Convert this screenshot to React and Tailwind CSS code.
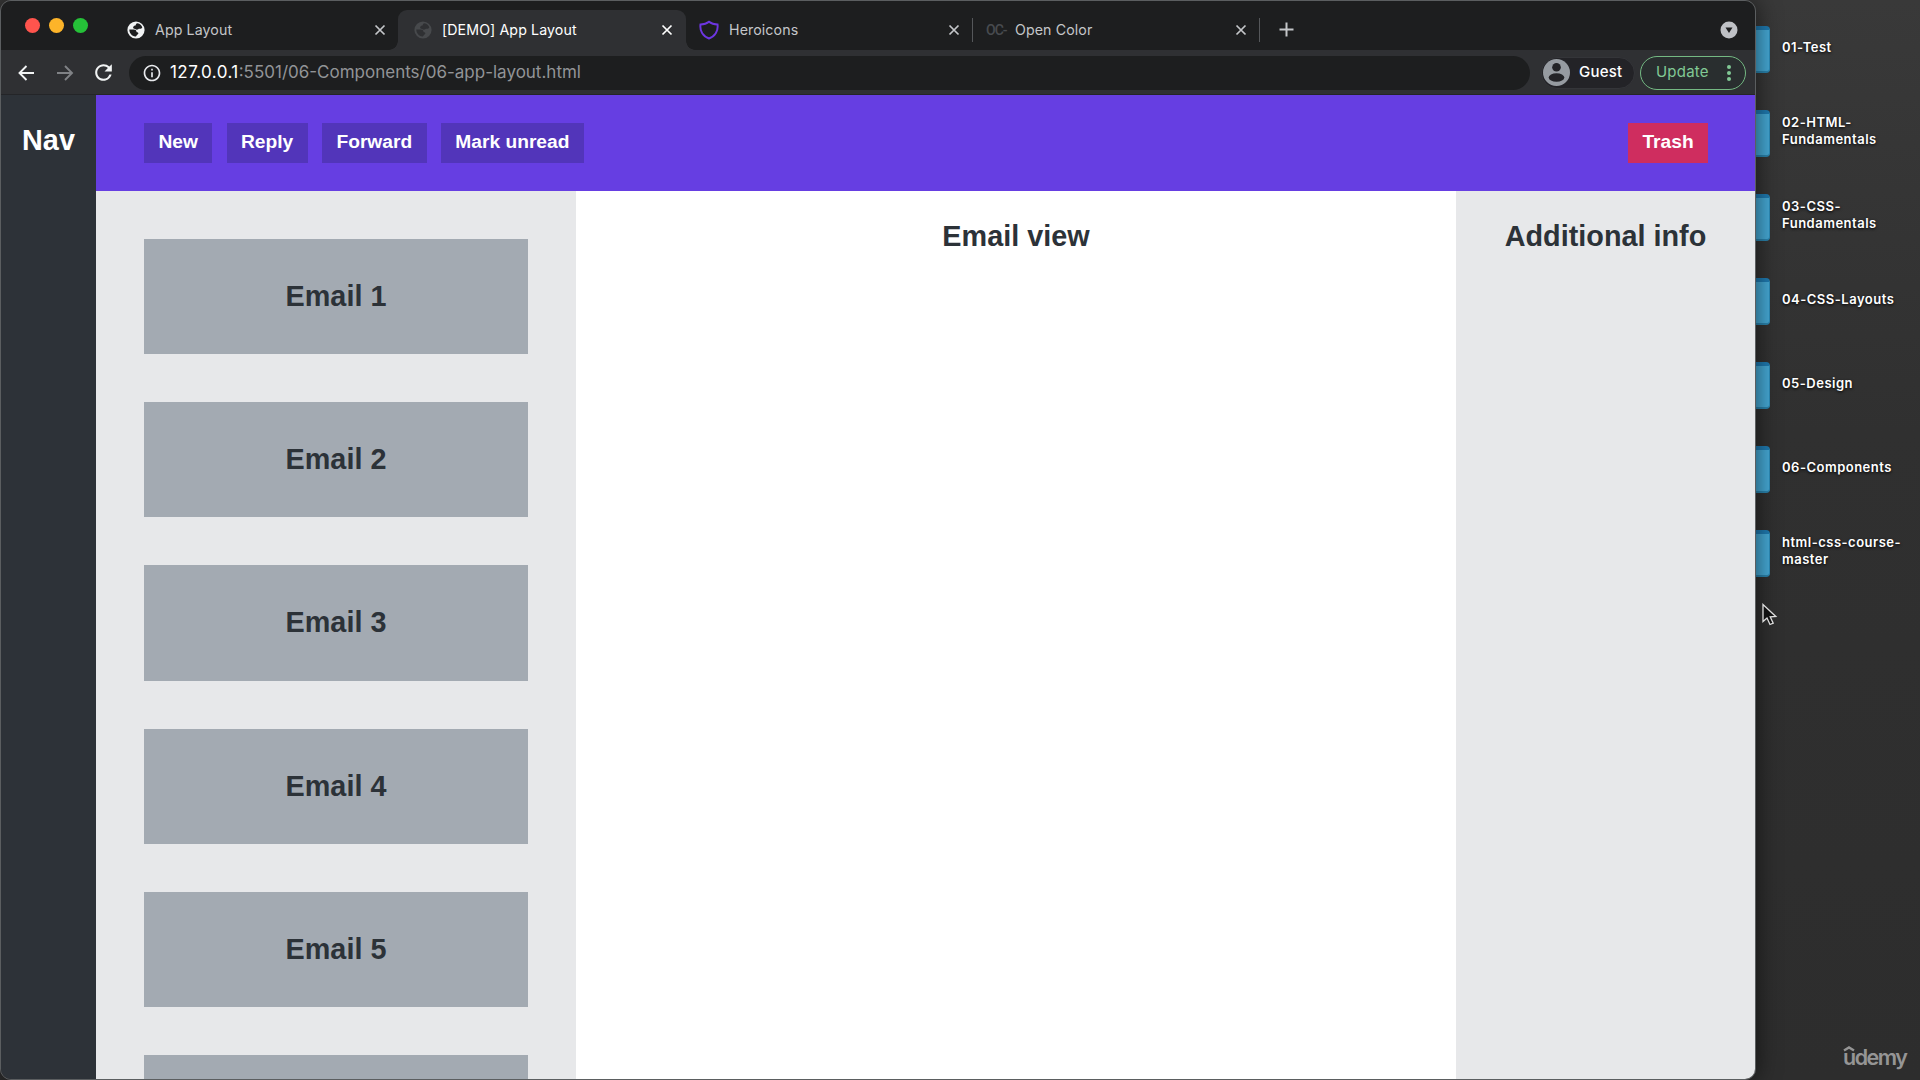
import { MdRefresh, MdInfoOutline } from "react-icons/md";

const folders = [
  ["01-Test"],
  ["02-HTML-", "Fundamentals"],
  ["03-CSS-", "Fundamentals"],
  ["04-CSS-Layouts"],
  ["05-Design"],
  ["06-Components"],
  ["html-css-course-", "master"],
];

function Close() {
  return (
    <svg width="12" height="12" viewBox="0 0 12 12" fill="none" stroke="currentColor" strokeWidth="1.7">
      <path d="M1.5 1.5l9 9M10.5 1.5l-9 9" />
    </svg>
  );
}

function Globe({ disc, land }) {
  return (
    <svg width="18" height="18" viewBox="0 0 18 18">
      <circle cx="9" cy="9" r="8.6" className={disc} />
      <path
        className={land}
        d="M10.5 2.3C13 2.8 14.700 4.300 15.300 6.500c-.5.9-1.500 1.300-2.600 1.200-1.200-.1-1.300.6-2.300.9-1.200.3-2-.5-3-.8-1.300-.4-1.700-1.400-.9-2.300.6-.7 1.500-.5 2.100-1.200.4-.6.2-1.700 1.900-2zM2.300 8.600h4.500c1.600 0 2.500.9 2.700 2.200.2.8 1.500.3 1.800 1.300.3 1-.9 1.700-1.700 2.300-.5.5-.5 1.200-1.300 1.200C5 15.400 2.400 12.400 2.300 8.600z"
      />
    </svg>
  );
}

function Traffic() {
  return (
    <div className="flex w-[110px] shrink-0 gap-[9px] pl-[24px] pt-[17px]">
      <span className="size-[15px] rounded-full bg-[#ff544d]" />
      <span className="size-[15px] rounded-full bg-[#fdb429]" />
      <span className="size-[15px] rounded-full bg-[#25c138]" />
    </div>
  );
}

function TabBar() {
  return (
    <div className="flex h-[49px] shrink-0 bg-[#1d1e1f] text-[14.2px] text-[#c4c6c9]">
      <Traffic />
      <div className="flex w-[287px] items-center pl-[16px] pr-[12px] pt-[9px]">
        <Globe disc="fill-[#f1f3f4]" land="fill-[#1d1e1f]" />
        <span className="ml-[10px] flex-1 tracking-[0.1px]">App Layout</span>
        <Close />
      </div>
      <div className="relative mt-[9px] flex w-[288px] items-center rounded-t-[9px] bg-[#2f3033] pl-[16px] pr-[13px] text-white">
        <div className="absolute -left-[9px] bottom-0 size-[9px] bg-[radial-gradient(circle_at_0_0,#1d1e1f_8.5px,#2f3033_9px)]" />
        <div className="absolute -right-[9px] bottom-0 size-[9px] bg-[radial-gradient(circle_at_100%_0,#1d1e1f_8.5px,#2f3033_9px)]" />
        <Globe disc="fill-[#47494c]" land="fill-[#2f3033]" />
        <span className="ml-[10px] flex-1 tracking-[0.1px]">[DEMO] App Layout</span>
        <Close />
      </div>
      <div className="flex w-[286px] items-center pl-[13px] pr-[12px] pt-[9px]">
        <svg width="20" height="20" viewBox="0 0 20 20" fill="none" stroke="#6d36e0" strokeWidth="2">
          <path d="M10 1.7C7.8 3.5 4.9 4.4 1.5 4.4c-.8 6 2 11.7 8.5 14.1 6.5-2.4 9.3-8.1 8.5-14.1-3.4 0-6.3-.9-8.5-2.7z" />
        </svg>
        <span className="ml-[10px] flex-1 tracking-[0.1px]">Heroicons</span>
        <Close />
      </div>
      <div className="mt-[17px] h-[24px] w-px bg-[#55575a]" />
      <div className="flex w-[286px] items-center pl-[13px] pr-[12px] pt-[9px]">
        <span className="w-[20px] font-[Roboto,sans-serif] text-[14px] font-medium tracking-[-1px] text-[#484b4f]">OC-</span>
        <span className="ml-[9px] flex-1 tracking-[0.1px]">Open Color</span>
        <Close />
      </div>
      <div className="mt-[17px] h-[24px] w-px bg-[#55575a]" />
      <svg className="ml-[19px] mt-[21px]" width="15" height="15" viewBox="0 0 15 15" stroke="currentColor" strokeWidth="2">
        <path d="M7.5.5v14M.5 7.5h14" />
      </svg>
      <svg className="ml-auto mr-[17px] mt-[20px]" width="18" height="18" viewBox="0 0 18 18">
        <circle cx="9" cy="9" r="8.5" fill="#bfc1c5" />
        <path d="M5.5 6.5h7L9 12z" fill="#1d1e1f" />
      </svg>
    </div>
  );
}

function Toolbar() {
  return (
    <div className="flex h-[45px] shrink-0 items-center border-b border-[#242528] bg-[#2f3033] pl-[17px] pr-[9px] pt-px">
      <svg width="17" height="16" viewBox="0 0 17 16" fill="none" stroke="#f1f3f4" strokeWidth="1.9">
        <path d="M16 8H1.5M8.5 1L1.5 8l7 7" />
      </svg>
      <svg className="ml-[22px]" width="17" height="16" viewBox="0 0 17 16" fill="none" stroke="#808286" strokeWidth="1.9">
        <path d="M0 8h15M8 1l7 7-7 7" />
      </svg>
      <MdRefresh className="ml-[17px] size-[25px] text-[#f1f3f4]" />
      <div className="ml-[13px] flex h-[34px] w-[1401px] items-center rounded-full bg-[#1d1e1f] pl-[13px]">
        <MdInfoOutline className="size-[20px] text-[#e8eaed]" />
        <span className="ml-[8px] text-[17px] text-[#929497]">
          <span className="tracking-[0.45px] text-white">127.0.0.1</span>:5501/06-Components/06-app-layout.html
        </span>
      </div>
      <div className="ml-[11px] flex h-[32px] w-[94px] items-center rounded-full border border-[#343539] bg-[#232327] pl-px text-white">
        <svg width="27" height="27" viewBox="0 0 27 27">
          <circle cx="13.5" cy="13.5" r="13.5" fill="#969ba1" />
          <circle cx="13.5" cy="8.2" r="4.3" fill="#232327" />
          <ellipse cx="13.5" cy="18.5" rx="7.8" ry="4.3" fill="#232327" />
        </svg>
        <span className="ml-[9px] text-[15px] font-medium tracking-[0.2px]">Guest</span>
      </div>
      <div className="ml-auto flex h-[34px] w-[106px] items-center justify-between rounded-full border border-[#74b983] bg-[#292e2f] pl-[15px] pr-[14px] text-[15px] tracking-[0.2px] text-[#81c995]">
        <span>Update</span>
        <span className="flex flex-col gap-[2px]">
          <i className="size-[4px] rounded-full bg-current" />
          <i className="size-[4px] rounded-full bg-current" />
          <i className="size-[4px] rounded-full bg-current" />
        </span>
      </div>
    </div>
  );
}

function Button({ children, className = "bg-[#5235ba]" }) {
  return (
    <button className={"h-[40.7px] px-[14.4px] pb-[2px] text-[19.2px] leading-[22px] font-bold text-white " + className}>
      {children}
    </button>
  );
}

function Page() {
  return (
    <div className="flex min-h-0 flex-1 font-['Liberation_Sans',sans-serif] text-[28.8px] font-bold leading-[33px] text-[#2c3238]">
      <nav className="w-[95px] shrink-0 bg-[#2d3238] pt-[29px] text-center text-white">Nav</nav>
      <div className="flex min-w-0 flex-1 flex-col">
        <header className="flex h-[96px] shrink-0 items-center gap-[14.4px] bg-[#663ee2] pl-[48px] pr-[47px]">
          <Button>New</Button>
          <Button>Reply</Button>
          <Button>Forward</Button>
          <Button>Mark unread</Button>
          <Button className="ml-auto bg-[#cf2d5f]">Trash</Button>
        </header>
        <div className="flex min-h-0 flex-1 text-center">
          <section className="flex w-[480px] shrink-0 flex-col gap-[48px] overflow-hidden bg-[#e7e8ea] px-[48px] pt-[48px]">
            {[1, 2, 3, 4, 5].map((n) => (
              <div key={n} className="flex h-[115.2px] shrink-0 items-center justify-center bg-[#a3aab2]">
                Email {n}
              </div>
            ))}
            <div className="h-[115.2px] shrink-0 bg-[#a3aab2]" />
          </section>
          <main className="flex-1 bg-white pt-[29px]">Email view</main>
          <aside className="w-[299px] bg-[#e7e8ea] pt-[29px]">Additional info</aside>
        </div>
      </div>
    </div>
  );
}

export default function App() {
  return (
    <div className="relative flex h-[1080px] w-[1920px] overflow-hidden bg-linear-to-b from-[#393939] via-[#303030] via-40% to-[#2d2d2d] font-[Inter,sans-serif]">
      <div className="relative z-10 flex w-[1756px] flex-col overflow-hidden rounded-[11px] border border-[#5b5e60] shadow-[0_0_24px_rgba(0,0,0,0.6)]">
        <TabBar />
        <Toolbar />
        <Page />
      </div>
      <div className="flex flex-1 flex-col pt-[5px] text-[13px] font-semibold leading-[16.7px] tracking-[0.5px] text-white">
        {folders.map((lines) => (
          <div key={lines[0]} className="flex h-[84px] items-center">
            <div className="mt-[5px] h-[47px] w-[14px] shrink-0 rounded-r-[4px] border-b-2 border-r border-t-4 border-b-[#2a83ad] border-r-[#2d8cb8] border-t-[#1f7ab0] bg-[#45a8d4]" />
            <div className="ml-[12px] whitespace-nowrap [text-shadow:0_1px_3px_#000]">
              {lines.map((l) => (
                <div key={l}>{l}</div>
              ))}
            </div>
          </div>
        ))}
      </div>
      <svg className="absolute left-[1761px] top-[603px] z-20" width="18" height="24" viewBox="0 0 18 24">
        <path d="M2 1.5v17l4-3.5 3 6.5 3.2-1.3-3-6.4 5.6-.3z" fill="#111" stroke="#ddd" strokeWidth="1.3" />
      </svg>
      <div className="absolute left-[1843px] top-[1042px] text-[21.5px] font-semibold leading-[30px] tracking-[-1.5px] text-[#959595]">
        udemy
        <svg className="absolute left-0 top-[3px]" width="12" height="7" viewBox="0 0 12 7" fill="none" stroke="currentColor" strokeWidth="2.4">
          <path d="M1 5.5l5-3 5 3" />
        </svg>
      </div>
    </div>
  );
}
